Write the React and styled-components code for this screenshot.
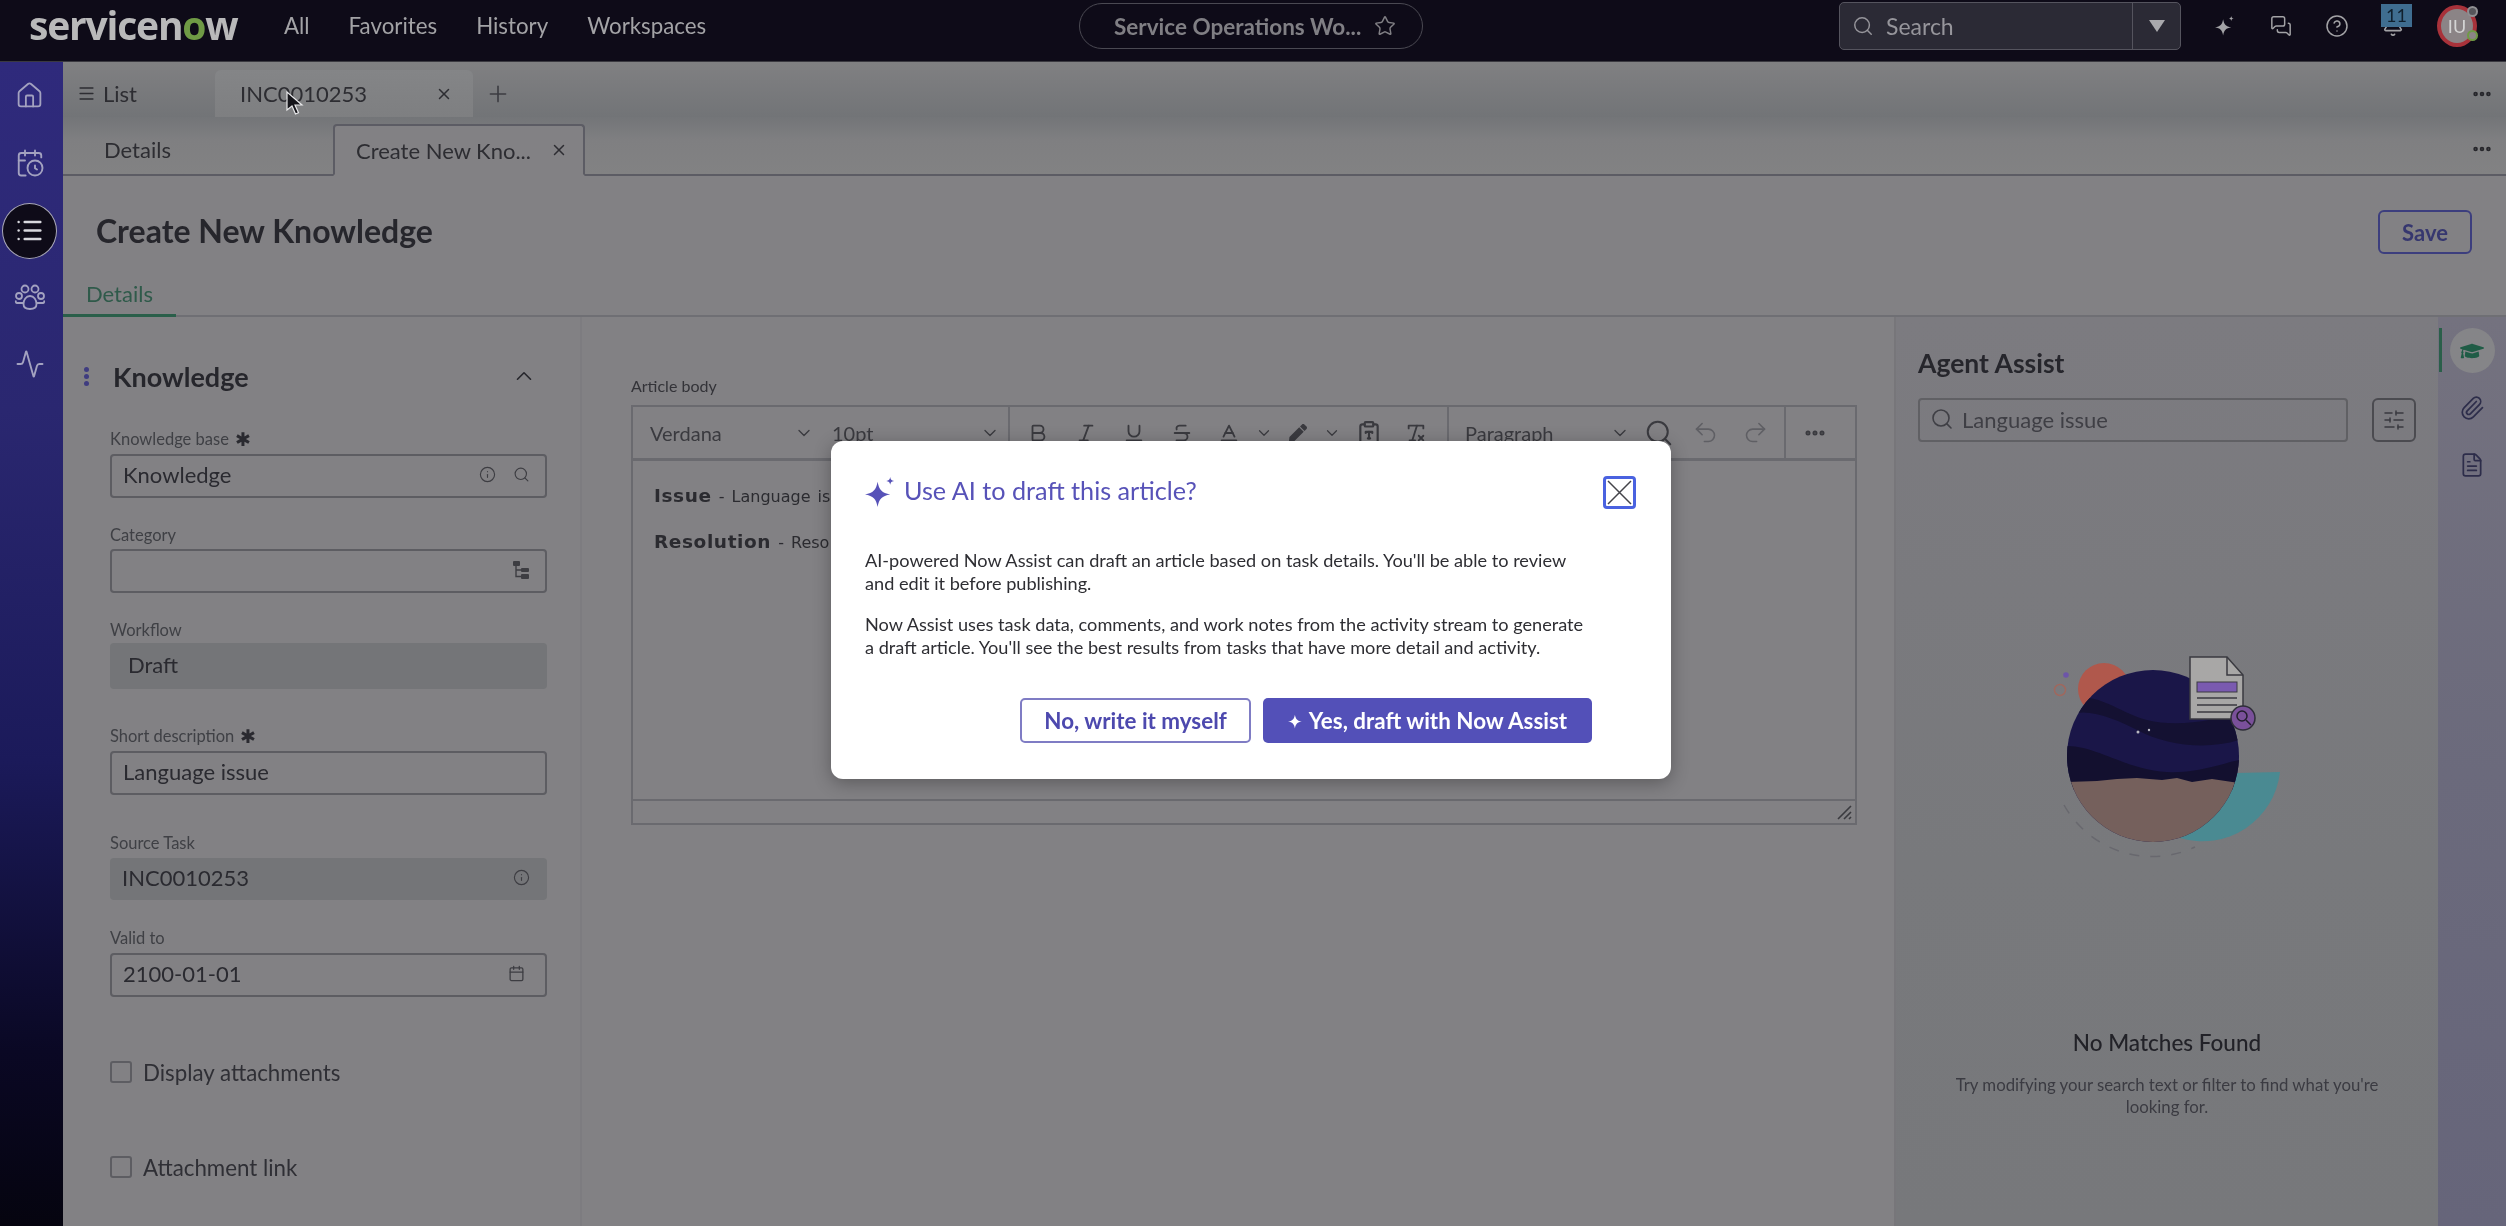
import React from 'react'
import styled, { createGlobalStyle } from 'styled-components'
import {
  Activity, Baseline, Bold, Calendar, CalendarClock, ChevronDown, ChevronUp, CircleHelp, ClipboardType,
  Ellipsis, FileText, House, Info, Italic, List, Menu, MessagesSquare, Paperclip, Plus,
  Redo2, RemoveFormatting, Search, SlidersHorizontal, Star, Strikethrough, Underline, Undo2, X, Bell
} from 'lucide-react'
import { FaGraduationCap, FaPen } from 'react-icons/fa'

const GlobalStyle = createGlobalStyle`
  html, body { margin: 0; padding: 0; background: #828184; }
  * { box-sizing: border-box; }
`

const Page = styled.div`
  position: relative;
  width: 2506px;
  height: 1226px;
  overflow: hidden;
  font-family: Lato, 'Open Sans', sans-serif;
  color: #2a2a30;
  background: #828184;
  filter: blur(0.6px);
`

const Dimmed = styled.div`
  width: 100%;
  height: 100%;
  display: flex;
  flex-direction: column;
`

const Header = styled.header`
  flex: none;
  height: 62px;
  padding-bottom: 9px;
  display: grid;
  grid-template-columns: 1079px 344px 1fr;
  align-items: center;
  background: #0e0b18;
  color: #a3a3a6;
  border-bottom: 1px solid #3a3940;
`

const HeaderLeft = styled.div`
  display: flex;
  align-items: center;
  padding-left: 29px;
`

const Logo = styled.div`
  width: 207px;
  margin-top: -3px;
  font-family: 'Open Sans', sans-serif;
  font-weight: 700;
  font-size: 39px;
  line-height: 44px;
  letter-spacing: -1.2px;
  color: #b9b9ba;
  white-space: nowrap;
  span { color: #6f9a45; }
`

const Nav = styled.nav`
  display: flex;
  gap: 39px;
  margin: -2px 0 0 48px;
  font-size: 22.3px;
`

const WorkspacePill = styled.div`
  height: 46px;
  display: flex;
  align-items: center;
  gap: 13px;
  padding-left: 34px;
  border: 1.5px solid #4a4952;
  border-radius: 23px;
  font-size: 22.5px;
  font-weight: 700;
  color: #807f84;
  white-space: nowrap;
`

const HeaderRight = styled.div`
  display: flex;
  justify-content: flex-end;
  align-items: center;
  gap: 32px;
  padding-right: 29px;
`

const GlobalSearch = styled.div`
  width: 342px;
  height: 48px;
  display: flex;
  align-items: center;
  background: #2b2a35;
  border: 1.5px solid #55545e;
  border-radius: 5px;
  font-size: 23px;
  color: #96959b;
`

const GlobalSearchField = styled.div`
  flex: 1;
  display: flex;
  align-items: center;
  gap: 12px;
  padding-left: 12px;
  height: 100%;
  border-right: 1.5px solid #55545e;
`

const Caret = styled.div`
  width: 47px;
  display: flex;
  justify-content: center;
  &::after {
    content: '';
    border-left: 8px solid transparent;
    border-right: 8px solid transparent;
    border-top: 12px solid #a9a9ad;
  }
`

const HeaderIcon = styled.div`
  position: relative;
  width: 24px;
  height: 24px;
  display: flex;
  align-items: center;
  justify-content: center;
  color: #a3a3a6;
`

const NotifBadge = styled.span`
  position: absolute;
  top: -10px;
  left: 0;
  width: 31px;
  height: 23px;
  background: #3f6d90;
  color: #10202e;
  font-size: 18px;
  line-height: 23px;
  text-align: center;
`

const Avatar = styled.div`
  position: relative;
  width: 40px;
  height: 42px;
  display: flex;
  align-items: center;
  justify-content: center;
  border: 4px solid #a8323a;
  border-radius: 50%;
  background: #8b8486;
  color: #d4d4d4;
  font-size: 18px;
`

const AvatarDot = styled.span`
  position: absolute;
  width: 11px;
  height: 11px;
  right: -5px;
  ${p => (p.$top ? 'top: -3px;' : 'bottom: 2px;')}
  border-radius: 50%;
  border: 2px solid ${p => (p.$top ? '#8f8f92' : '#6f9a45')};
  background: ${p => (p.$top ? '#55555a' : '#8b8486')};
`

const Body = styled.div`
  flex: 1;
  display: flex;
  min-height: 0;
`

const Rail = styled.aside`
  flex: none;
  width: 63px;
  padding-right: 4px;
  display: flex;
  flex-direction: column;
  background: linear-gradient(180deg, #2f2a7c 0%, #2a2770 30%, #1b1a5a 60%, #0a0824 85%, #05040f 100%);
  color: #a3a2c0;
`

const RailItem = styled.div`
  height: ${p => p.$height || 67.5}px;
  display: flex;
  align-items: center;
  justify-content: center;
`

const RailActive = styled.div`
  width: 55px;
  height: 56px;
  flex: none;
  display: flex;
  align-items: center;
  justify-content: center;
  background: #0e0b18;
  border: 1.5px solid #a9a8b8;
  border-radius: 50%;
  color: #d8d8de;
`

const Main = styled.main`
  flex: 1;
  min-width: 0;
  display: flex;
  flex-direction: column;
`

const PrimaryTabs = styled.div`
  flex: none;
  height: 55px;
  display: flex;
  align-items: flex-end;
  padding-right: 13px;
  background: linear-gradient(180deg, #808082 0%, #727477 100%);
  font-size: 22px;
  color: #2d2d32;
`

const ListTab = styled.div`
  width: 152px;
  height: 47px;
  display: flex;
  align-items: center;
  gap: 7px;
  padding-left: 14px;
`

const RecordTab = styled.div`
  width: 258px;
  height: 47px;
  display: flex;
  align-items: center;
  justify-content: space-between;
  padding: 0 20px 0 25px;
  background: linear-gradient(180deg, #848587 0%, #7e7f81 100%);
  border-radius: 6px 6px 0 0;
`

const AddTab = styled.div`
  margin-left: 12px;
  height: 47px;
  display: flex;
  align-items: center;
  color: #3c3c42;
`

const TabMore = styled.div`
  margin-left: auto;
  height: ${p => p.$height || 47}px;
  display: flex;
  align-items: center;
  color: #26262b;
`

const SecondaryTabs = styled.div`
  flex: none;
  height: 59px;
  display: flex;
  align-items: flex-end;
  padding-right: 13px;
  background: linear-gradient(180deg, #737578 0%, #7f7f81 40%, #828283 100%);
  border-bottom: 2px solid #5c5c64;
  font-size: 22px;
  color: #2d2d32;
`

const PlainTab = styled.div`
  width: 270px;
  height: 50px;
  display: flex;
  align-items: center;
  padding-left: 41px;
`

const ActiveTab = styled.div`
  width: 252px;
  height: 52px;
  margin-bottom: -2px;
  display: flex;
  align-items: center;
  justify-content: space-between;
  padding: 0 15px 0 21px;
  background: #828184;
  border: 2px solid #5c5c64;
  border-bottom: 2px solid #828184;
  border-radius: 4px 4px 0 0;
  white-space: nowrap;
`

const TitleRow = styled.div`
  flex: none;
  height: 94px;
  display: flex;
  align-items: flex-start;
  justify-content: space-between;
  padding: 34px 34px 0 33px;
`

const PageTitle = styled.h1`
  margin: -1px 0 0;
  font-size: 32px;
  font-weight: 700;
  line-height: 44px;
  color: #26262c;
`

const SaveButton = styled.button`
  width: 94px;
  height: 44px;
  background: transparent;
  border: 2px solid #3c3e7e;
  border-radius: 6px;
  font: 700 22px Lato, sans-serif;
  color: #36376f;
`

const SubTabs = styled.div`
  flex: none;
  height: 47px;
  display: flex;
  border-bottom: 2px solid #6f6f74;
`

const SubTab = styled.div`
  width: 113px;
  height: 47px;
  padding-left: 23px;
  line-height: 47px;
  font-size: 22px;
  color: #2f5a4a;
  border-bottom: 3px solid #2a5f4a;
`

const Content = styled.div`
  flex: 1;
  min-height: 0;
  display: flex;
`

const FormColumn = styled.section`
  flex: none;
  width: 519px;
  padding: 38px 33px 0 47px;
  border-right: 2px solid #7d7c80;
`

const SectionHead = styled.div`
  position: relative;
  height: 42px;
  display: flex;
  align-items: center;
  justify-content: space-between;
  padding-left: 3px;
  padding-right: 10px;
  font-size: 27px;
  font-weight: 700;
  color: #26262c;
`

const DragDots = styled.span`
  position: absolute;
  left: -26px;
  top: 12px;
  width: 5px;
  height: 5px;
  border-radius: 50%;
  background: #3f3c80;
  box-shadow: 0 7px 0 #3f3c80, 0 14px 0 #3f3c80;
`

const Field = styled.div`
  margin-top: ${p => p.$top}px;
`

const FieldLabel = styled.label`
  display: flex;
  align-items: center;
  gap: 6px;
  height: 20px;
  font-size: 16.5px;
  color: #3f4045;
  margin-bottom: ${p => p.$gap || 5}px;
`

const RequiredMark = styled.span`
  font-size: 19px;
  line-height: 20px;
  color: #2a2a30;
`

const Input = styled.div`
  height: 44px;
  display: flex;
  align-items: center;
  justify-content: space-between;
  padding: 0 15px 3px 11px;
  border: 2px solid #5d5d62;
  border-radius: 4px;
  font-size: 22px;
  color: #2a2a30;
`

const ReadOnly = styled.div`
  height: ${p => p.$height}px;
  display: flex;
  align-items: center;
  justify-content: space-between;
  padding: 0 17px 3px ${p => p.$pad}px;
  background: #747578;
  border-radius: 4px;
  font-size: 22px;
  color: #2a2a30;
`

const FieldIcons = styled.div`
  display: flex;
  align-items: center;
  gap: 17px;
  margin-right: ${p => p.$shift || 0}px;
  color: #3d3d42;
`

const CheckRow = styled.div`
  display: flex;
  align-items: center;
  gap: 11px;
  height: 30px;
  margin-top: ${p => p.$top}px;
  font-size: 22.3px;
  color: #2f2f35;
`

const CheckBox = styled.span`
  width: 22px;
  height: 22px;
  border: 2px solid #5d5d62;
  border-radius: 3px;
`

const EditorColumn = styled.section`
  flex: none;
  width: 1312px;
  padding: 59px 37px 0 49px;
`

const EditorLabel = styled.div`
  height: 20px;
  margin-bottom: 9px;
  font-size: 16px;
  color: #333338;
`

const Editor = styled.div`
  height: 420px;
  display: flex;
  flex-direction: column;
  border: 2px solid #6a6a6f;
`

const Toolbar = styled.div`
  flex: none;
  height: 54px;
  display: flex;
  border-bottom: 3px solid #6a6a6f;
  color: #3a3a3f;
  font-size: 20px;
`

const ToolGroup = styled.div`
  display: flex;
  align-items: center;
  width: ${p => p.$width}px;
  padding-left: ${p => p.$pad || 0}px;
  border-right: ${p => (p.$last ? 'none' : '2px solid #6a6a6f')};
`

const ToolSelect = styled.div`
  display: flex;
  align-items: center;
  justify-content: space-between;
  width: ${p => p.$width}px;
  padding: 0 8px 0 ${p => p.$pad}px;
`

const ToolButton = styled.div`
  width: ${p => p.$width}px;
  display: flex;
  justify-content: center;
  color: ${p => (p.$muted ? '#5f5f64' : '#3a3a3f')};
`

const EditorBody = styled.div`
  flex: 1;
  padding: 24px 21px 0;
  font-family: 'DejaVu Sans', Verdana, sans-serif;
  font-size: 16px;
  line-height: 22px;
  word-spacing: 2px;
  color: #2b2b30;
  p { margin: 0 0 23px; white-space: nowrap; }
  b { font-size: 18.5px; letter-spacing: 0.6px; }
`

const EditorStatus = styled.div`
  flex: none;
  height: 24px;
  display: flex;
  justify-content: flex-end;
  align-items: center;
  padding-right: 2px;
  border-top: 2px solid #6a6a6f;
  color: #3a3a3f;
`

const AssistPanel = styled.section`
  flex: none;
  width: 544px;
  padding: 27px 22px 0 22px;
  background: linear-gradient(180deg, #7c7b80 0%, #78797c 60%, #77787b 100%);
  border-left: 2px solid #77767a;
`

const AssistTitle = styled.h2`
  margin: 0;
  height: 38px;
  line-height: 38px;
  font-size: 26.5px;
  font-weight: 700;
  color: #26262c;
`

const AssistSearchRow = styled.div`
  display: flex;
  gap: 24px;
  margin-top: 16px;
`

const AssistSearch = styled.div`
  flex: 1;
  height: 44px;
  display: flex;
  align-items: center;
  gap: 8px;
  padding: 0 0 2px 10px;
  border: 2px solid #606064;
  border-radius: 4px;
  font-size: 22px;
  color: #3f3f45;
`

const FilterButton = styled.div`
  width: 44px;
  height: 44px;
  display: flex;
  align-items: center;
  justify-content: center;
  border: 2px solid #4b4b50;
  border-radius: 6px;
  color: #3a3a40;
`

const Illustration = styled.svg`
  display: block;
  margin: 208px auto 0;
`

const EmptyTitle = styled.div`
  margin-top: 159px;
  text-align: center;
  font-size: 22.5px;
  font-weight: 500;
  line-height: 28px;
  color: #222228;
`

const EmptyText = styled.div`
  margin-top: 17px;
  text-align: center;
  font-size: 16.8px;
  line-height: 22px;
  color: #3b3b42;
`

const SideRail = styled.aside`
  flex: none;
  position: relative;
  width: 68px;
  display: flex;
  flex-direction: column;
  align-items: center;
  padding-top: 11px;
  background: linear-gradient(180deg, #74727f 0%, #6b6a7c 50%, #66657a 100%);
  color: #2d2d4a;
`

const SideItem = styled.div`
  height: 45px;
  width: 45px;
  margin-bottom: 12px;
  display: flex;
  align-items: center;
  justify-content: center;
  border-radius: 50%;
  ${p => p.$active && `
    background: #858588;
    color: #1f5c46;
  `}
`

const SideMarker = styled.span`
  position: absolute;
  left: 1px;
  top: 11px;
  width: 3px;
  height: 44px;
  background: #2a5f4a;
`

const Backdrop = styled.div`
  position: absolute;
  inset: 0;
  display: flex;
  align-items: center;
  justify-content: center;
  padding: 0 4px 6px 0;
`

const Modal = styled.div`
  width: 840px;
  height: 338px;
  padding: 35px 35px 0 34px;
  background: #fff;
  border-radius: 12px;
  box-shadow: 0 4px 18px rgba(0, 0, 0, 0.3);
`

const ModalHead = styled.div`
  display: flex;
  align-items: center;
  justify-content: space-between;
  height: 33px;
`

const ModalTitle = styled.h3`
  margin: 0;
  display: flex;
  align-items: center;
  gap: 8px;
  font-size: 25.2px;
  font-weight: 400;
  color: #5752b8;
`

const TitleText = styled.span`
  margin-top: -5px;
`

const CloseButton = styled.button`
  width: 33px;
  height: 33px;
  padding: 0;
  display: flex;
  align-items: center;
  justify-content: center;
  background: #fff;
  border: 3px solid #4a62e0;
  border-radius: 4px;
  color: #44444a;
`

const ModalText = styled.p`
  margin: ${p => p.$top}px 0 0;
  font-size: 18.15px;
  line-height: 23px;
  color: #2e2e33;
  white-space: nowrap;
`

const ModalActions = styled.div`
  display: flex;
  justify-content: flex-end;
  gap: 12px;
  margin-top: 39px;
  padding-right: 44px;
`

const OutlineButton = styled.button`
  width: 231px;
  height: 45px;
  background: #fff;
  border: 2px solid #7f7cc4;
  border-radius: 5px;
  font: 700 22.4px Lato, sans-serif;
  color: #4d49ae;
`

const PrimaryButton = styled.button`
  width: 329px;
  height: 45px;
  display: flex;
  align-items: center;
  justify-content: center;
  gap: 4px;
  background: #5350b8;
  border: none;
  border-radius: 5px;
  font: 700 22.4px Lato, sans-serif;
  color: #fff;
`

const Pointer = styled.svg`
  position: absolute;
  left: 285px;
  top: 90px;
`

const Sparkle = ({ size, color, small }) => (
  <svg width={size} height={size} viewBox='0 0 32 32' fill={color}>
    <path d='M13 5c1.500 8.500 4.500 11.500 13 13-8.500 1.500-11.500 4.500-13 13-1.500-8.500-4.500-11.500-13-13 8.500-1.500 11.500-4.500 13-13z' />
    {small && <path d='M26 0c.5 2.800 1.200 3.500 4 4-2.800.5-3.500 1.200-4 4-.5-2.800-1.200-3.500-4-4 2.800-.5 3.500-1.200 4-4z' />}
  </svg>
)

const Tool = ({ w, muted, children }) => <ToolButton $width={w} $muted={muted}>{children}</ToolButton>

const PeopleIcon = () => (
  <svg width='32' height='30' viewBox='0 0 32 30' fill='none' stroke='currentColor' strokeWidth='1.800'>
    <circle cx='11' cy='6' r='3.500' />
    <circle cx='21' cy='6' r='3.500' />
    <circle cx='5' cy='13' r='3' />
    <circle cx='27' cy='13' r='3' />
    <path d='M16 13c-4 0-6.500 4-6.500 8 0 3 2 5 6.500 5s6.500-2 6.500-5c0-4-2.500-8-6.500-8z' />
    <path d='M9 20H3c-1 0-1.500-1-1-2.500M23 20h6c1 0 1.500-1 1-2.500' />
  </svg>
)

const TreeIcon = () => (
  <svg width='18' height='20' viewBox='0 0 18 20' fill='currentColor'>
    <rect x='1' y='1' width='7' height='5' rx='1' />
    <rect x='9' y='8' width='8' height='4' rx='1' />
    <rect x='9' y='14' width='8' height='5' rx='1' />
    <path d='M4 6v10.500h5M4 10h5' fill='none' stroke='currentColor' strokeWidth='1.400' />
  </svg>
)

const NoMatchArt = () => (
  <Illustration width='260' height='220' viewBox='0 0 260 220'>
    <defs>
      <clipPath id='globe'><circle cx='116' cy='106' r='86' /></clipPath>
    </defs>
    <circle cx='67' cy='39' r='26' fill='#b0584c' />
    <circle cx='23' cy='40' r='5.500' fill='none' stroke='#a0685e' strokeWidth='1.500' />
    <circle cx='29' cy='25' r='2.800' fill='#6d55a8' />
    <path d='M199 123 L243 122 A78 78 0 0 1 143 188 Z' fill='#4a8a92' />
    <path d='M27 155 A101 101 0 0 0 158 197' fill='none' stroke='#68686e' strokeWidth='1.500' strokeDasharray='10 11' />
    <g clipPath='url(#globe)'>
      <rect x='30' y='20' width='172' height='172' fill='#1a1648' />
      <path d='M30 50 C60 40 80 62 110 70 C140 78 180 70 202 62 L202 90 C170 100 130 96 100 80 C80 70 50 56 30 66 Z' fill='#141132' />
      <path d='M30 96 C60 96 90 120 130 122 C160 124 190 112 202 110 L202 140 L30 140 Z' fill='#13102f' />
      <path d='M30 132 L60 131 L80 129 L100 128 L125 130 L140 128 L155 132 L175 129 L202 133 L202 192 L30 192 Z' fill='#75605c' />
    </g>
    <circle cx='101' cy='82' r='1.500' fill='#b8b8c0' />
    <circle cx='112' cy='80' r='1.200' fill='#b8b8c0' />
    <path d='M153 7 H190 L206 25 V69 H153 Z' fill='#a8a7a6' stroke='#3a3a40' strokeWidth='1.500' />
    <path d='M190 7 V25 H206' fill='none' stroke='#3a3a40' strokeWidth='1.500' />
    <rect x='160' y='32' width='40' height='10' fill='#7a5ab0' stroke='#3a3a40' />
    <path d='M160 48 H200 M160 55 H200 M160 62 H200' stroke='#3a3a40' strokeWidth='1.500' />
    <circle cx='206' cy='68' r='12' fill='#7a509a' stroke='#2e2e38' strokeWidth='1.500' />
    <circle cx='205' cy='66' r='5' fill='none' stroke='#221f2c' strokeWidth='1.500' />
    <path d='M209 70 L214 75' stroke='#221f2c' strokeWidth='1.500' />
  </Illustration>
)

const App = () => {
  return (
    <Page>
      <GlobalStyle />
      <Dimmed>
        <Header>
          <HeaderLeft>
            <Logo>servicen<span>o</span>w</Logo>
            <Nav>
              <span>All</span>
              <span>Favorites</span>
              <span>History</span>
              <span>Workspaces</span>
            </Nav>
          </HeaderLeft>
          <WorkspacePill>
            Service Operations Wo...
            <Star size={22} strokeWidth={1.6} />
          </WorkspacePill>
          <HeaderRight>
            <GlobalSearch>
              <GlobalSearchField>
                <Search size={22} strokeWidth={1.6} />
                Search
              </GlobalSearchField>
              <Caret />
            </GlobalSearch>
            <HeaderIcon><Sparkle size={20} color='#a3a3a6' small /></HeaderIcon>
            <HeaderIcon><MessagesSquare size={22} strokeWidth={1.6} /></HeaderIcon>
            <HeaderIcon><CircleHelp size={24} strokeWidth={1.5} /></HeaderIcon>
            <HeaderIcon>
              <Bell size={22} strokeWidth={1.8} />
              <NotifBadge>11</NotifBadge>
            </HeaderIcon>
            <Avatar>
              IU
              <AvatarDot $top />
              <AvatarDot />
            </Avatar>
          </HeaderRight>
        </Header>
        <Body>
          <Rail>
            <RailItem><House size={29} strokeWidth={1.5} /></RailItem>
            <RailItem><CalendarClock size={30} strokeWidth={1.5} /></RailItem>
            <RailItem><RailActive><List size={29} strokeWidth={2} /></RailActive></RailItem>
            <RailItem><PeopleIcon /></RailItem>
            <RailItem $height={64}><Activity size={30} strokeWidth={1.5} /></RailItem>
          </Rail>
          <Main>
            <PrimaryTabs>
              <ListTab><Menu size={19} />List</ListTab>
              <RecordTab>INC0010253<X size={18} /></RecordTab>
              <AddTab><Plus size={26} strokeWidth={1.5} /></AddTab>
              <TabMore><Ellipsis size={22} strokeWidth={3} /></TabMore>
            </PrimaryTabs>
            <SecondaryTabs>
              <PlainTab>Details</PlainTab>
              <ActiveTab>Create New Kno...<X size={18} /></ActiveTab>
              <TabMore $height={50}><Ellipsis size={22} strokeWidth={3} /></TabMore>
            </SecondaryTabs>
            <TitleRow>
              <PageTitle>Create New Knowledge</PageTitle>
              <SaveButton>Save</SaveButton>
            </TitleRow>
            <SubTabs><SubTab>Details</SubTab></SubTabs>
            <Content>
              <FormColumn>
                <SectionHead>
                  <DragDots />
                  Knowledge
                  <ChevronUp size={26} strokeWidth={1.5} />
                </SectionHead>
                <Field $top={32}>
                  <FieldLabel $gap={5}>Knowledge base <RequiredMark>✱</RequiredMark></FieldLabel>
                  <Input>
                    Knowledge
                    <FieldIcons><Info size={17} strokeWidth={1.6} /><Search size={17} strokeWidth={1.6} /></FieldIcons>
                  </Input>
                </Field>
                <Field $top={27}>
                  <FieldLabel $gap={4}>Category</FieldLabel>
                  <Input><span /><FieldIcons><TreeIcon /></FieldIcons></Input>
                </Field>
                <Field $top={27}>
                  <FieldLabel $gap={3}>Workflow</FieldLabel>
                  <ReadOnly $height={46} $pad={18}>Draft</ReadOnly>
                </Field>
                <Field $top={37}>
                  <FieldLabel>Short description <RequiredMark>✱</RequiredMark></FieldLabel>
                  <Input>Language issue</Input>
                </Field>
                <Field $top={38}>
                  <FieldLabel>Source Task</FieldLabel>
                  <ReadOnly $height={42} $pad={12}>INC0010253<FieldIcons><Info size={17} strokeWidth={1.6} /></FieldIcons></ReadOnly>
                </Field>
                <Field $top={28}>
                  <FieldLabel>Valid to</FieldLabel>
                  <Input>2100-01-01<FieldIcons $shift={5}><Calendar size={17} strokeWidth={1.8} /></FieldIcons></Input>
                </Field>
                <CheckRow $top={60}><CheckBox />Display attachments</CheckRow>
                <CheckRow $top={65}><CheckBox />Attachment link</CheckRow>
              </FormColumn>
              <EditorColumn>
                <EditorLabel>Article body</EditorLabel>
                <Editor>
                  <Toolbar>
                    <ToolGroup $width={377}>
                      <ToolSelect $width={189} $pad={17}>Verdana<ChevronDown size={20} strokeWidth={1.6} /></ToolSelect>
                      <ToolSelect $width={186} $pad={10}>10pt<ChevronDown size={20} strokeWidth={1.6} /></ToolSelect>
                    </ToolGroup>
                    <ToolGroup $width={439} $pad={4}>
                      <Tool w={48}><Bold size={22} /></Tool>
                      <Tool w={48}><Italic size={22} /></Tool>
                      <Tool w={47}><Underline size={22} /></Tool>
                      <Tool w={49}><Strikethrough size={22} /></Tool>
                      <Tool w={46}><Baseline size={22} /></Tool>
                      <Tool w={24}><ChevronDown size={18} strokeWidth={1.6} /></Tool>
                      <Tool w={43}><FaPen size={18} /></Tool>
                      <Tool w={26}><ChevronDown size={18} strokeWidth={1.6} /></Tool>
                      <Tool w={48}><ClipboardType size={26} /></Tool>
                      <Tool w={46}><RemoveFormatting size={22} /></Tool>
                    </ToolGroup>
                    <ToolGroup $width={337}>
                      <ToolSelect $width={189} $pad={16}>Paragraph<ChevronDown size={20} strokeWidth={1.6} /></ToolSelect>
                      <Tool w={42}><Search size={30} strokeWidth={1.6} /></Tool>
                      <Tool w={50} muted><Undo2 size={27} strokeWidth={1.4} /></Tool>
                      <Tool w={50} muted><Redo2 size={27} strokeWidth={1.4} /></Tool>
                    </ToolGroup>
                    <ToolGroup $width={58} $last>
                      <Tool w={58}><Ellipsis size={24} strokeWidth={3} /></Tool>
                    </ToolGroup>
                  </Toolbar>
                  <EditorBody>
                    <p><b>Issue</b> - Language issue</p>
                    <p><b>Resolution</b> - Resolution</p>
                  </EditorBody>
                  <EditorStatus>
                    <svg width='18' height='18' viewBox='0 0 18 18' stroke='currentColor' strokeWidth='1.600'>
                      <path d='M3 16 16 3M9 16l7-7M14 16l2-2' />
                    </svg>
                  </EditorStatus>
                </Editor>
              </EditorColumn>
              <AssistPanel>
                <AssistTitle>Agent Assist</AssistTitle>
                <AssistSearchRow>
                  <AssistSearch>
                    <Search size={24} strokeWidth={1.6} />
                    Language issue
                  </AssistSearch>
                  <FilterButton><SlidersHorizontal size={24} strokeWidth={1.5} /></FilterButton>
                </AssistSearchRow>
                <NoMatchArt />
                <EmptyTitle>No Matches Found</EmptyTitle>
                <EmptyText>
                  Try modifying your search text or filter to find what you're<br />looking for.
                </EmptyText>
              </AssistPanel>
              <SideRail>
                <SideMarker />
                <SideItem $active><FaGraduationCap size={24} /></SideItem>
                <SideItem><Paperclip size={26} strokeWidth={1.6} /></SideItem>
                <SideItem><FileText size={26} strokeWidth={1.6} /></SideItem>
              </SideRail>
            </Content>
          </Main>
        </Body>
      </Dimmed>
      <Pointer width='20' height='26' viewBox='0 0 20 26'>
        <path d='M2 2v18l5-4 3.500 8 3-1.300L10 15h7z' fill='#15151a' stroke='#e8e8ea' strokeWidth='1.200' />
      </Pointer>
      <Backdrop>
        <Modal>
          <ModalHead>
            <ModalTitle>
              <Sparkle size={31} color='#5752b8' small />
              <TitleText>Use AI to draft this article?</TitleText>
            </ModalTitle>
            <CloseButton>
              <svg width='27' height='27' viewBox='0 0 27 27' stroke='currentColor' strokeWidth='1.500'>
                <path d='M2 2 25 25M25 2 2 25' />
              </svg>
            </CloseButton>
          </ModalHead>
          <ModalText $top={40}>
            AI-powered Now Assist can draft an article based on task details. You'll be able to review<br />
            and edit it before publishing.
          </ModalText>
          <ModalText $top={18}>
            Now Assist uses task data, comments, and work notes from the activity stream to generate<br />
            a draft article. You'll see the best results from tasks that have more detail and activity.
          </ModalText>
          <ModalActions>
            <OutlineButton>No, write it myself</OutlineButton>
            <PrimaryButton><Sparkle size={17} color='#fff' />Yes, draft with Now Assist</PrimaryButton>
          </ModalActions>
        </Modal>
      </Backdrop>
    </Page>
  )
}

export default App
